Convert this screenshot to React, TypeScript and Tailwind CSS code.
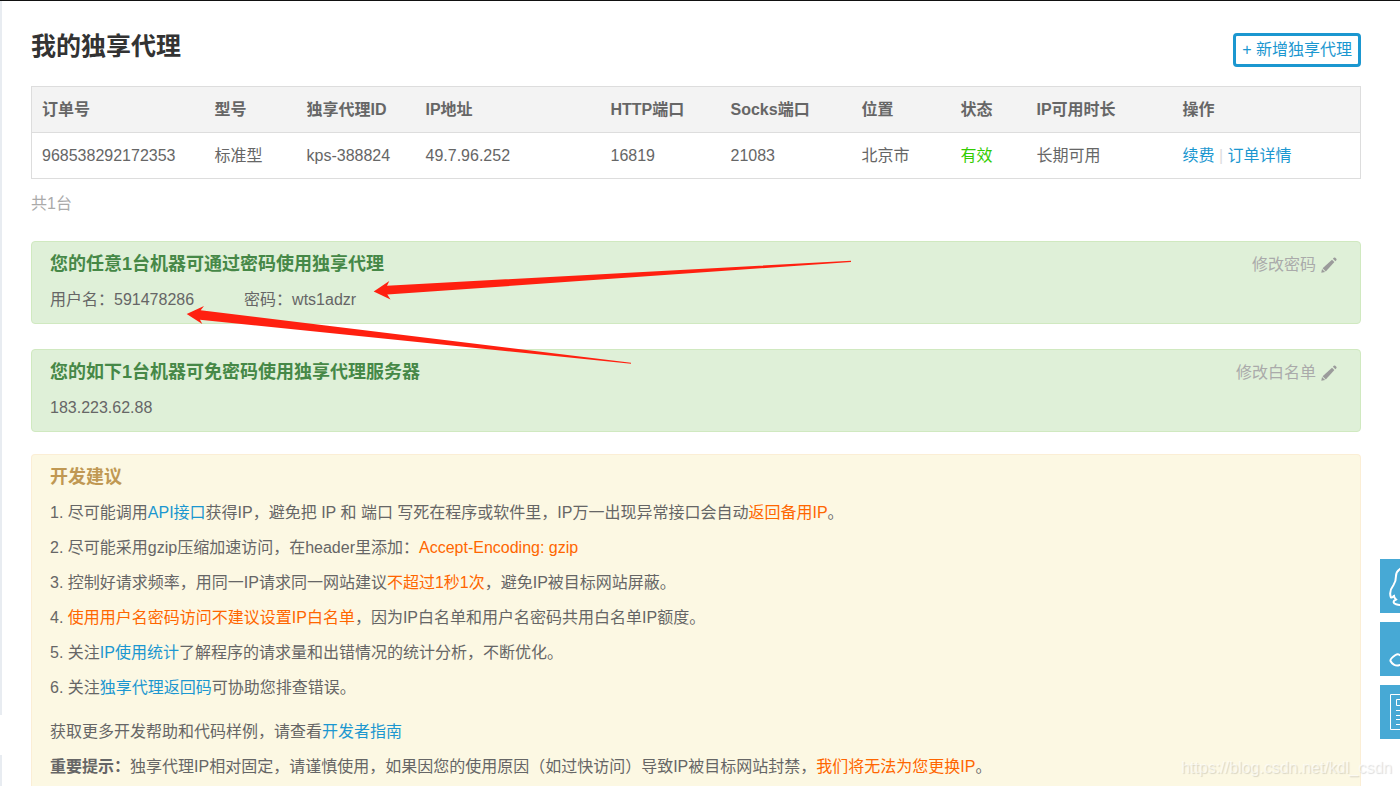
import type { ReactNode } from 'react';

const columns = [
  { label: '订单号', width: 'w-[173px]' },
  { label: '型号', width: 'w-[92px]' },
  { label: '独享代理ID', width: 'w-[119px]' },
  { label: 'IP地址', width: 'w-[185px]' },
  { label: 'HTTP端口', width: 'w-[120px]' },
  { label: 'Socks端口', width: 'w-[131px]' },
  { label: '位置', width: 'w-[99px]' },
  { label: '状态', width: 'w-[76px]' },
  { label: 'IP可用时长', width: 'w-[146px]' },
  { label: '操作', width: '' },
];

function Link({ children }: { children: ReactNode }) {
  return (
    <a href="#" className="text-[#1b97d0] hover:underline">
      {children}
    </a>
  );
}

function Hot({ children }: { children: ReactNode }) {
  return <span className="text-[#ff6600]">{children}</span>;
}

function PencilIcon() {
  return (
    <svg viewBox="0 0 16 16" className="h-4 w-4 fill-[#9b9b9b]" aria-hidden="true">
      <path d="M0.3 15.7 1 11.9 4.100 15Z" />
      <path d="M1.600 11.200 11 2.700 13.400 5.100 4.800 14.400Z" />
      <path d="M11.9 1.700 12.800 0.7Q13.5 0.100 14.3 0.7L15.3 1.7Q16 2.5 15.3 3.300L14.4 4.200Z" />
    </svg>
  );
}

function AccessPanel({ title, action, className, children }: {
  title: string;
  action: string;
  className: string;
  children: ReactNode;
}) {
  return (
    <section className={`rounded border border-[#d0e9c0] bg-[#dff0d8] px-[18px] pt-[5px] pb-[6px] leading-[35px] ${className}`}>
      <div className="flex items-center justify-between">
        <h2 className="text-lg leading-[35px] font-bold text-[#468847]">{title}</h2>
        <a href="#" className="flex items-center gap-[5px] pr-[5px] text-[#aaa]">
          {action}
          <PencilIcon />
        </a>
      </div>
      {children}
    </section>
  );
}

function ProxyTable() {
  return (
    <table className="w-full table-fixed border-collapse border border-[#ddd] text-left">
      <thead>
        <tr className="h-[46px] border-b border-[#ddd] bg-[#f3f3f3]">
          {columns.map((c) => (
            <th key={c.label} className={`px-[10px] font-bold ${c.width}`}>
              {c.label}
            </th>
          ))}
        </tr>
      </thead>
      <tbody>
        <tr className="h-[46px]">
          <td className="px-[10px]">968538292172353</td>
          <td className="px-[10px]">标准型</td>
          <td className="px-[10px]">kps-388824</td>
          <td className="px-[10px]">49.7.96.252</td>
          <td className="px-[10px]">16819</td>
          <td className="px-[10px]">21083</td>
          <td className="px-[10px]">北京市</td>
          <td className="px-[10px] text-[#33cc00]">有效</td>
          <td className="px-[10px]">长期可用</td>
          <td className="px-[10px]">
            <Link>续费</Link>
            <span className="text-[#ddd]"> | </span>
            <Link>订单详情</Link>
          </td>
        </tr>
      </tbody>
    </table>
  );
}

function Advice() {
  return (
    <section className="flex-1 rounded-t border border-b-0 border-[#fbeed5] bg-[#fcf8e3] px-[18px] pt-[5px] leading-[35px]">
      <h2 className="text-lg leading-[35px] font-bold text-[#c09853]">开发建议</h2>
      <ol className="mb-[9px] list-inside list-decimal">
        <li>尽可能调用<Link>API接口</Link>获得IP，避免把 IP 和 端口 写死在程序或软件里，IP万一出现异常接口会自动<Hot>返回备用IP</Hot>。</li>
        <li>尽可能采用gzip压缩加速访问，在header里添加：<Hot>Accept-Encoding: gzip</Hot></li>
        <li>控制好请求频率，用同一IP请求同一网站建议<Hot>不超过1秒1次</Hot>，避免IP被目标网站屏蔽。</li>
        <li><Hot>使用用户名密码访问不建议设置IP白名单</Hot>，因为IP白名单和用户名密码共用白名单IP额度。</li>
        <li>关注<Link>IP使用统计</Link>了解程序的请求量和出错情况的统计分析，不断优化。</li>
        <li>关注<Link>独享代理返回码</Link>可协助您排查错误。</li>
      </ol>
      <p>获取更多开发帮助和代码样例，请查看<Link>开发者指南</Link></p>
      <p>
        <b>重要提示：</b>独享代理IP相对固定，请谨慎使用，如果因您的使用原因（如过快访问）导致IP被目标网站封禁，<Hot>我们将无法为您更换IP</Hot>。
      </p>
    </section>
  );
}

// Contact buttons docked on the right edge, half slid out of view
function SideDock() {
  return (
    <div className="fixed top-[559px] right-0 flex w-5 flex-col gap-[9px] overflow-hidden">
      <button aria-label="QQ" className="h-[54px] w-[54px] bg-[#47a9d5]">
        <svg viewBox="0 0 54 54" className="h-full w-full fill-none stroke-white stroke-2">
          <path d="M27 8C22 8 16 11 16 17C16 21 15.500 23 13.500 26C10.500 30 9.500 35 11 38.500C12.500 39 13 37.500 14 37C14 38.500 15 39.500 16 40.500C12.500 42 13 44.500 16 45.200C20 46.500 24 46 27 44C30 46 34 46.500 38 45.200C41 44.500 41.500 42 38 40.500C39 39.500 40 38.500 40 37C41 37.500 41.500 39 43 38.500C44.500 35 43.500 30 40.500 26C38.500 23 38 21 38 17C38 11 32 8 27 8Z" />
        </svg>
      </button>
      <button aria-label="客服" className="h-[54px] w-[54px] bg-[#47a9d5]">
        <svg viewBox="0 0 54 54" className="h-full w-full fill-none stroke-white stroke-2">
          <path d="M22 35C20 32.500 18 31.500 15.500 33C12.500 35 10 37.500 10.500 39C12 42 15.500 44 18 43.500L24 42" />
        </svg>
      </button>
      <button aria-label="文档" className="h-[54px] w-[54px] bg-[#47a9d5]">
        <svg viewBox="0 0 54 54" className="h-full w-full fill-none stroke-white">
          <path d="M10.500 9.500H43V44.500H10.500Z" />
          <path d="M16.500 14.500H26V20.500H16.500ZM16 25.500H38M16 30.500H38M16 34.500H38M16 39.500H38" />
        </svg>
      </button>
    </div>
  );
}

function Arrows() {
  return (
    <svg className="pointer-events-none absolute top-0 left-0 h-[400px] w-[900px] fill-[#ff2010]" viewBox="0 1 900 400" aria-hidden="true">
      <path d="M373.700 291.500 389.300 281 387 285.700 851 260.800V262L387.300 294.500 390.500 299.500Z" />
      <path d="M186.700 314 204 306 200.700 310.300 631 362.700V363.800L200 319.700 202.300 324Z" />
    </svg>
  );
}

export default function App() {
  return (
    <div className="relative flex min-h-screen border-t border-[#111] bg-white font-['Liberation_Sans','Noto_Sans_CJK_SC',sans-serif] text-base text-[#666]">
      <div className="flex w-[2px] flex-col bg-[#e8ecf1]">
        <div className="mt-auto mb-[31px] h-10 bg-white" />
      </div>
      <main className="flex flex-1 flex-col pt-8 pr-[39px] pl-[29px]">
        <header className="mb-[19px] flex items-start justify-between">
          <h1 className="text-[25px] leading-[26px] font-bold text-[#333]">我的独享代理</h1>
          <button className="h-[34px] rounded border-3 border-[#1b97d0] px-[6px] leading-7 text-[#1b97d0]">
            + 新增独享代理
          </button>
        </header>
        <ProxyTable />
        <p className="mt-[13px] mb-[25px] leading-6 text-[#aaa]">共1台</p>

        <AccessPanel title="您的任意1台机器可通过密码使用独享代理" action="修改密码" className="mb-[25px]">
          <p className="flex gap-[50px]">
            <span>用户名：591478286</span>
            <span>密码：wts1adzr</span>
          </p>
        </AccessPanel>
        <AccessPanel title="您的如下1台机器可免密码使用独享代理服务器" action="修改白名单" className="mb-[22px]">
          <p>183.223.62.88</p>
        </AccessPanel>
        <Advice />
      </main>
      <Arrows />
      <SideDock />
      <div className="pointer-events-none absolute right-2 bottom-2 leading-5 text-white/60 [text-shadow:1px_1px_1px_rgb(0_0_0/0.14)]">
        https://blog.csdn.net/kdl_csdn
      </div>
    </div>
  );
}
